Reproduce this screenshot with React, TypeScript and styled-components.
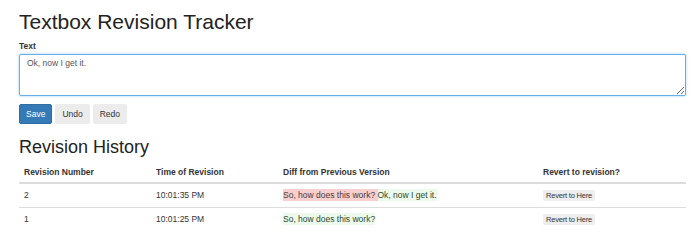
import styled, { createGlobalStyle } from 'styled-components';

const GlobalStyle = createGlobalStyle`
  body {
    margin: 0;
    background: #fff;
    font-family: "Liberation Sans", Arial, sans-serif;
    color: #333;
  }
`;

const Page = styled.div`
  padding: 10px 15px 0 19px;
  width: 666px;
`;

const Title = styled.h1`
  margin: 0 0 7px;
  font-size: 21px;
  font-weight: 400;
  color: #222;
  line-height: 24px;
`;

const Label = styled.label`
  display: block;
  font-size: 8.5px;
  line-height: 10px;
  font-weight: 700;
  color: #333;
  margin-bottom: 3px;
`;

const TextArea = styled.textarea`
  display: block;
  box-sizing: border-box;
  width: 667px;
  height: 42px;
  margin: 0;
  padding: 3px 7px;
  border: 1px solid #66afe9;
  border-radius: 2px;
  box-shadow: 0 0 3px rgba(102, 175, 233, 0.6);
  font-family: "Liberation Sans", Arial, sans-serif;
  font-size: 8.5px;
  line-height: 11px;
  color: #555;
  resize: vertical;
  outline: none;
`;

const Toolbar = styled.div`
  display: flex;
  gap: 3px;
  margin-top: 8px;
`;

const Button = styled.button<{ $primary?: boolean }>`
  height: 20px;
  padding: 0 6px;
  border-radius: 2px;
  border: 1px solid ${(p) => (p.$primary ? '#2e6da4' : '#ececec')};
  background: ${(p) => (p.$primary ? '#337ab7' : '#ececec')};
  color: ${(p) => (p.$primary ? '#fff' : '#333')};
  font-family: "Liberation Sans", Arial, sans-serif;
  font-size: 8.5px;
  min-width: 33px;
`;

const Heading = styled.h2`
  margin: 12px 0 5px;
  font-size: 18px;
  font-weight: 400;
  color: #222;
  line-height: 22px;
`;

const Table = styled.table`
  width: 667px;
  table-layout: fixed;
  border-collapse: collapse;
  font-size: 8.5px;
  line-height: 11px;
`;

const Th = styled.th<{ $w: number }>`
  box-sizing: border-box;
  width: ${(p) => p.$w}px;
  text-align: left;
  font-weight: 700;
  color: #333;
  padding: 4px 5px 4px;
  border-bottom: 2px solid #ddd;
`;

const Td = styled.td`
  padding: 6px 5px;
  height: 11px;
  color: #333;
  border-top: 1px solid #ddd;
`;

const Removed = styled.span`
  background: #f8cfcf;
  color: #4a3a3a;
  padding: 1px 0;
`;

const Added = styled.span`
  background: #edf9ed;
  color: #2c4a2c;
  padding: 1px 0;
`;

const RevertButton = styled.button`
  display: block;
  height: 11px;
  padding: 0 3px;
  border: none;
  border-radius: 2px;
  background: #eeeeee;
  color: #333;
  font-family: "Liberation Sans", Arial, sans-serif;
  font-size: 7.5px;
  letter-spacing: -0.2px;
`;

export default function App() {
  return (
    <Page>
      <GlobalStyle />
      <Title>Textbox Revision Tracker</Title>
      <Label>Text</Label>
      <TextArea defaultValue="Ok, now I get it. " spellCheck />
      <Toolbar>
        <Button $primary>Save</Button>
        <Button>Undo</Button>
        <Button>Redo</Button>
      </Toolbar>
      <Heading>Revision History</Heading>
      <Table>
        <thead>
          <tr>
            <Th $w={132}>Revision Number</Th>
            <Th $w={127}>Time of Revision</Th>
            <Th $w={260}>Diff from Previous Version</Th>
            <Th $w={148}>Revert to revision?</Th>
          </tr>
        </thead>
        <tbody>
          <tr>
            <Td>2</Td>
            <Td>10:01:35 PM</Td>
            <Td>
              <Removed>So, how does this work? </Removed>
              <Added>Ok, now I get it.</Added>
            </Td>
            <Td>
              <RevertButton>Revert to Here</RevertButton>
            </Td>
          </tr>
          <tr>
            <Td>1</Td>
            <Td>10:01:25 PM</Td>
            <Td>
              <Added>So, how does this work?</Added>
            </Td>
            <Td>
              <RevertButton>Revert to Here</RevertButton>
            </Td>
          </tr>
        </tbody>
      </Table>
    </Page>
  );
}
